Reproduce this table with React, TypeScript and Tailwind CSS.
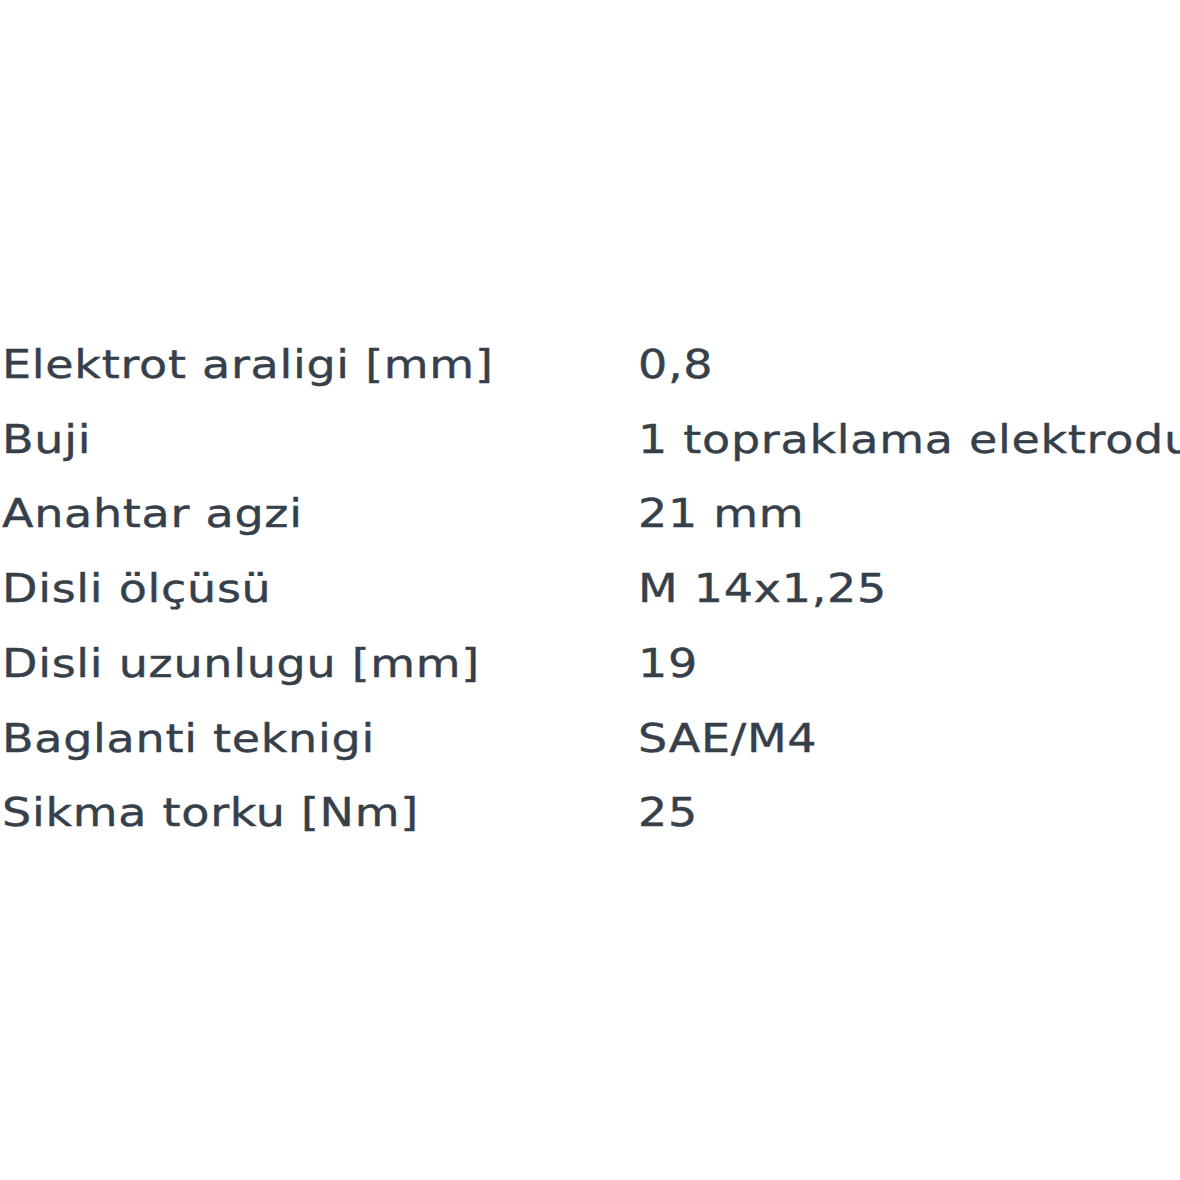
export default function App() {
  const rows: [string, string][] = [
    ["Elektrot araligi [mm]", "0,8"],
    ["Buji", "1 topraklama elektrodu"],
    ["Anahtar agzi", "21 mm"],
    ["Disli ölçüsü", "M 14x1,25"],
    ["Disli uzunlugu [mm]", "19"],
    ["Baglanti teknigi", "SAE/M4"],
    ["Sikma torku [Nm]", "25"],
  ];
  return (
    <div className="w-[1180px] h-[1180px] bg-white overflow-hidden">
      <div
        className="pt-[328px] pl-[2px] text-[39px] tracking-[0.6px] text-[#36404a] [-webkit-text-stroke:0.4px_#36404a]"
        style={{ fontFamily: '"DejaVu Sans", Verdana, sans-serif' }}
      >
        {rows.map(([k, v]) => (
          <div key={k} className="flex h-[74.7px] items-center whitespace-nowrap">
            <div className="w-[636px] shrink-0">
              <span className="inline-block origin-left scale-x-[1.18]">{k}</span>
            </div>
            <div>
              <span className="inline-block origin-left scale-x-[1.18]">{v}</span>
            </div>
          </div>
        ))}
      </div>
    </div>
  );
}
